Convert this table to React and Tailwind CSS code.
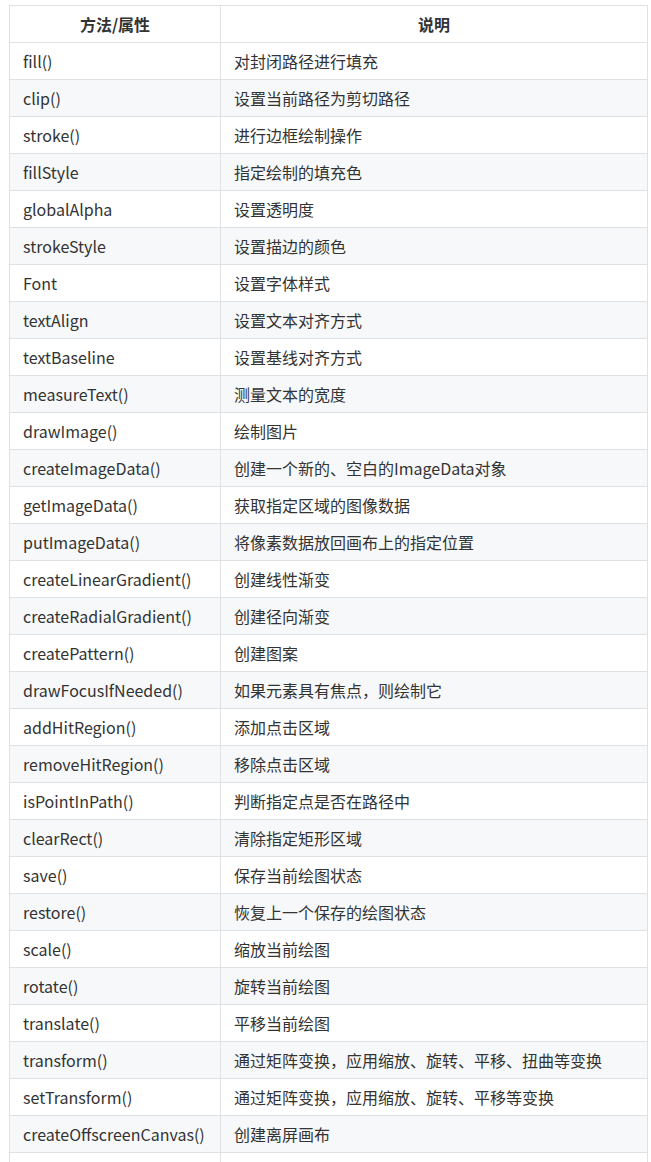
const rows = [
  ['fill()', '对封闭路径进行填充'],
  ['clip()', '设置当前路径为剪切路径'],
  ['stroke()', '进行边框绘制操作'],
  ['fillStyle', '指定绘制的填充色'],
  ['globalAlpha', '设置透明度'],
  ['strokeStyle', '设置描边的颜色'],
  ['Font', '设置字体样式'],
  ['textAlign', '设置文本对齐方式'],
  ['textBaseline', '设置基线对齐方式'],
  ['measureText()', '测量文本的宽度'],
  ['drawImage()', '绘制图片'],
  ['createImageData()', '创建一个新的、空白的ImageData对象'],
  ['getImageData()', '获取指定区域的图像数据'],
  ['putImageData()', '将像素数据放回画布上的指定位置'],
  ['createLinearGradient()', '创建线性渐变'],
  ['createRadialGradient()', '创建径向渐变'],
  ['createPattern()', '创建图案'],
  ['drawFocusIfNeeded()', '如果元素具有焦点，则绘制它'],
  ['addHitRegion()', '添加点击区域'],
  ['removeHitRegion()', '移除点击区域'],
  ['isPointInPath()', '判断指定点是否在路径中'],
  ['clearRect()', '清除指定矩形区域'],
  ['save()', '保存当前绘图状态'],
  ['restore()', '恢复上一个保存的绘图状态'],
  ['scale()', '缩放当前绘图'],
  ['rotate()', '旋转当前绘图'],
  ['translate()', '平移当前绘图'],
  ['transform()', '通过矩阵变换，应用缩放、旋转、平移、扭曲等变换'],
  ['setTransform()', '通过矩阵变换，应用缩放、旋转、平移等变换'],
  ['createOffscreenCanvas()', '创建离屏画布'],
  ['', ''],
]

export default function App() {
  return (
    <div className="min-h-screen bg-white pt-[5px] pl-[9px] pr-[3px] text-[16px] leading-[22px] text-[#333] font-['Noto_Sans_CJK_SC',sans-serif]">
      <table className="w-[639px] border-collapse table-fixed">
        <thead>
          <tr className="h-[37px]">
            <th className="w-[211px] border border-[#dfe2e5] px-[13px] font-bold text-center">方法/属性</th>
            <th className="border border-[#dfe2e5] px-[13px] font-bold text-center">说明</th>
          </tr>
        </thead>
        <tbody>
          {rows.map(([name, desc], i) => (
            <tr key={i} className={`h-[37px] ${i % 2 === 1 ? 'bg-[#f6f8fa]' : 'bg-white'}`}>
              <td className="border border-[#dfe2e5] px-[13px] whitespace-nowrap">{name}</td>
              <td className="border border-[#dfe2e5] px-[13px] whitespace-nowrap">{desc}</td>
            </tr>
          ))}
        </tbody>
      </table>
    </div>
  )
}
